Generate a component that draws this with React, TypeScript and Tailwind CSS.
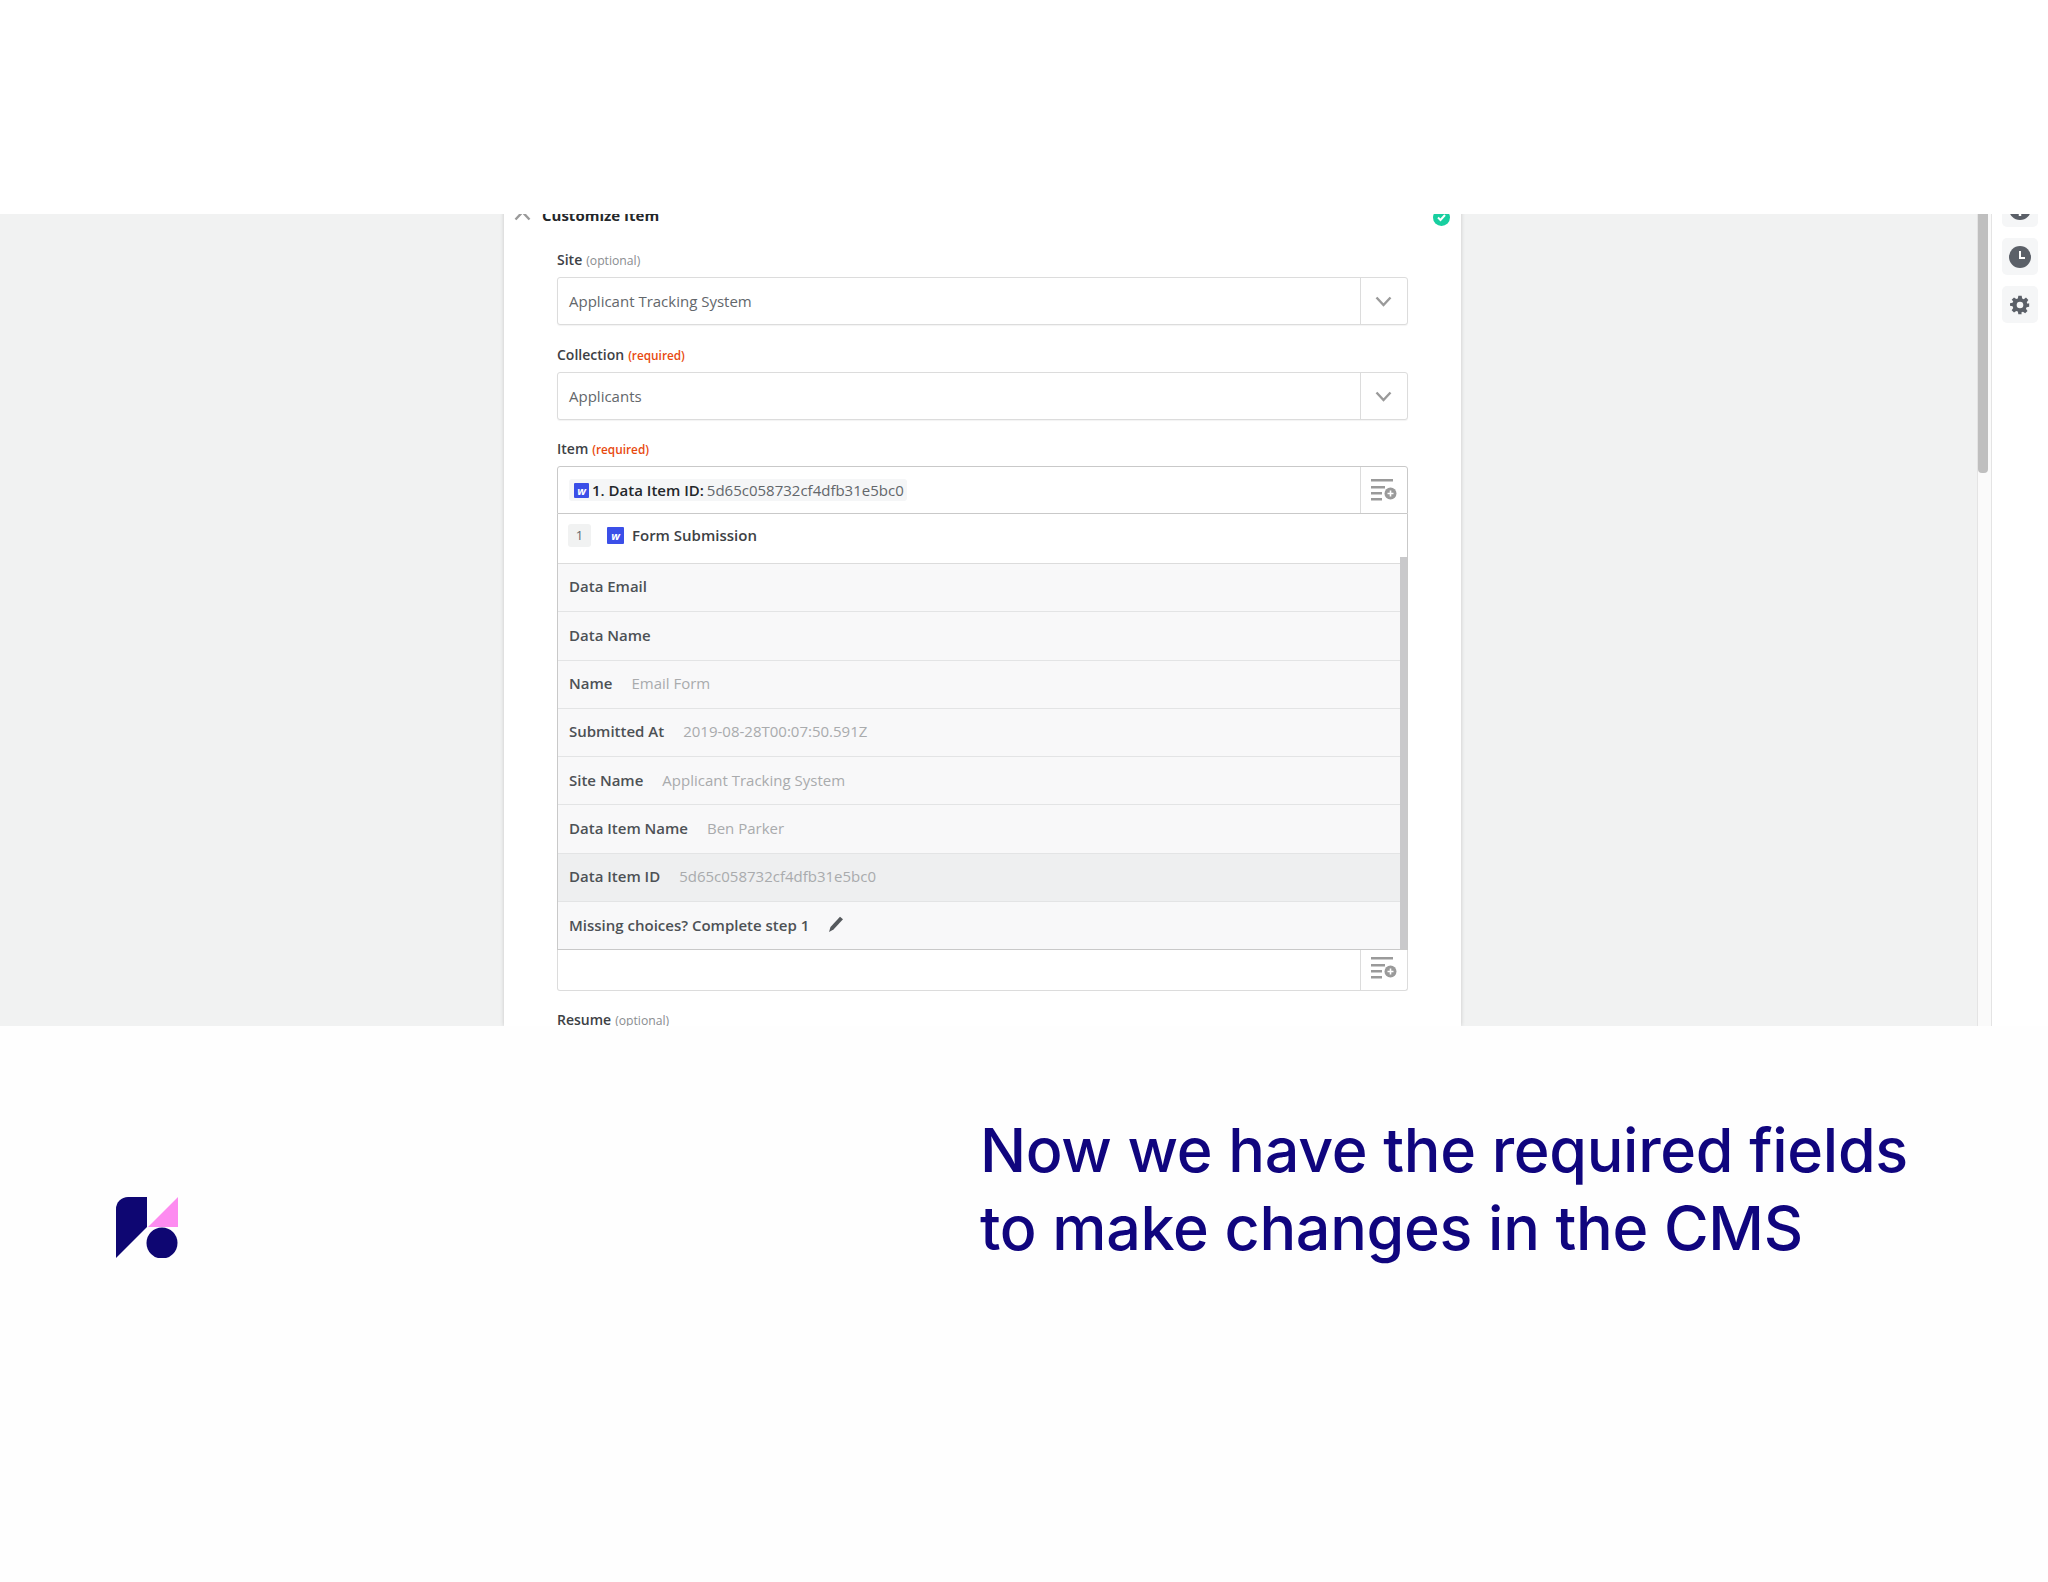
const rows = [
  { label: "Data Email", value: "" },
  { label: "Data Name", value: "" },
  { label: "Name", value: "Email Form" },
  { label: "Submitted At", value: "2019-08-28T00:07:50.591Z" },
  { label: "Site Name", value: "Applicant Tracking System" },
  { label: "Data Item Name", value: "Ben Parker" },
  { label: "Data Item ID", value: "5d65c058732cf4dfb31e5bc0", active: true },
];

function WebflowBadge({ size }: { size: string }) {
  return (
    <span className={`${size} inline-flex shrink-0 items-center justify-center rounded-[1px] bg-[#3b4fe8] text-[11px] font-bold italic leading-none text-white`}>
      w
    </span>
  );
}

function ListPlusIcon() {
  return (
    <svg width="26" height="22" viewBox="0 0 26 22" className="text-[#9a9a9a]">
      <rect x="0" y="0" width="22" height="2.5" fill="currentColor" />
      <rect x="0" y="7" width="14" height="2.5" fill="currentColor" />
      <rect x="0" y="13" width="11" height="2.5" fill="currentColor" />
      <rect x="0" y="19" width="11" height="2.5" fill="currentColor" />
      <circle cx="19.5" cy="14.5" r="6" fill="currentColor" />
      <path d="M19.5 11.5v6M16.5 14.5h6" stroke="#fff" strokeWidth="1.6" />
    </svg>
  );
}

function Chevron({ up }: { up?: boolean }) {
  return (
    <svg width="17" height="11" viewBox="0 0 17 11" fill="none" className="text-[#9a9a9a]">
      <path d={up ? "M1.500 9.500L8.500 2l7 7.500" : "M1.500 1.500L8.500 9l7-7.500"} stroke="currentColor" strokeWidth="2.400" />
    </svg>
  );
}

function FieldLabel({ name, note, required }: { name: string; note: string; required?: boolean }) {
  return (
    <div className="mb-[9px] flex h-[17px] items-baseline gap-[4px] leading-[17px]">
      <span className="text-[14px] font-semibold text-[#3d4145]">{name}</span>
      <span className={`${required ? "text-[11.8px] font-semibold text-[#e8490f]" : "text-[12.2px] text-[#8a8d90]"}`}>{note}</span>
    </div>
  );
}

function SelectField({ value }: { value: string }) {
  return (
    <div className="flex h-[48px] rounded-[3px] border border-[#dcdcdc] bg-white shadow-[0_1px_1px_rgba(0,0,0,0.05)]">
      <div className="flex flex-1 items-center pl-[11px] pt-[1px] text-[15px] text-[#63676b]">{value}</div>
      <div className="flex w-[47px] items-center justify-center border-l border-[#dcdcdc] pr-[1px] pt-[1px]">
        <Chevron />
      </div>
    </div>
  );
}

export default function App() {
  return (
    <div className="min-h-[1582px] bg-[#fefefe] font-['Open_Sans',sans-serif]">
      <div className="h-[214px] bg-white" />

      {/* Screen capture band */}
      <div className="flex h-[812px] overflow-hidden bg-[#f1f2f2]">
        <div className="w-[504px] shrink-0" />

        <div className="-mt-[14px] w-[957px] shrink-0 bg-white pl-[53px] pr-[53px] shadow-[0_0_4px_rgba(0,0,0,0.18)]">
          <div className="relative -ml-[43px] -mr-[33px] flex h-[28px] items-center pt-[3px]">
            <Chevron up />
            <span className="ml-[11px] text-[15px] font-bold text-[#24272a]">Customize Item</span>
            <span className="absolute -right-[9px] top-[9px] flex h-[17px] w-[17px] items-center justify-center rounded-full bg-[#18cfa0]">
              <svg width="11" height="11" viewBox="0 0 11 11" fill="none">
                <path d="M2 5.500l2.500 2.500L9 3" stroke="#fff" strokeWidth="2" />
              </svg>
            </span>
          </div>

          <div className="mt-[23px]">
            <FieldLabel name="Site" note="(optional)" />
            <SelectField value="Applicant Tracking System" />
          </div>
          <div className="mt-[21px]">
            <FieldLabel name="Collection" note="(required)" required />
            <SelectField value="Applicants" />
          </div>
          <div className="mt-[20px]">
            <FieldLabel name="Item" note="(required)" required />
            <div className="flex h-[48px] rounded-t-[3px] border border-[#c9c9c9] bg-white">
              <div className="flex flex-1 items-center pl-[11px]">
                <span className="flex h-[22px] items-center gap-[3px] rounded-[3px] bg-[#f5f6f7] pl-[5px] pr-[3px] text-[15px]">
                  <WebflowBadge size="h-[15px] w-[15px]" />
                  <span className="font-semibold text-[#24272a]">1. Data Item ID:</span>
                  <span className="text-[#63676b]">5d65c058732cf4dfb31e5bc0</span>
                </span>
              </div>
              <div className="flex w-[47px] items-center justify-center border-l border-[#dcdcdc]">
                <ListPlusIcon />
              </div>
            </div>

            {/* Dropdown list */}
            <div className="relative border-x border-b border-[#c9c9c9]">
              <div className="flex h-[50px] items-center border-b border-[#dcdcdc] bg-white pb-[6px] pl-[10px]">
                <span className="flex h-[23px] w-[23px] items-center justify-center rounded-[3px] bg-[#f1f2f2] text-[13px] text-[#63676b]">1</span>
                <span className="ml-[16px] flex"><WebflowBadge size="h-[17px] w-[17px]" /></span>
                <span className="ml-[8px] text-[15px] font-semibold text-[#3d4145]">Form Submission</span>
              </div>
              {rows.map((row) => (
                <div
                  key={row.label}
                  className={`flex h-[48.3px] items-center gap-[19px] border-b border-[#e3e4e5] pb-[2px] pl-[11px] text-[15px] ${row.active ? "bg-[#eeeff0]" : "bg-[#f8f8f9]"}`}
                >
                  <span className="font-semibold text-[#4d5155]">{row.label}</span>
                  {row.value && <span className="text-[#a9abad]">{row.value}</span>}
                </div>
              ))}
              <div className="flex h-[47px] items-center gap-[20px] bg-[#f8f8f9] pb-[1px] pl-[11px] text-[15px] font-semibold text-[#4d5155]">
                <span>Missing choices? Complete step 1</span>
                <svg width="15" height="16" viewBox="0 0 15 16" className="-mt-[2px]">
                  <path d="M11 .8l3 2.400L4.500 13.500 0 16l1.500-5z" fill="#55595d" />
                </svg>
              </div>
              <div className="absolute bottom-0 right-0 top-[43px] w-[7px] bg-[#c9c9cb]" />
            </div>

            <div className="flex h-[41px] rounded-b-[3px] border-x border-b border-[#dcdcdc] bg-white">
              <div className="flex-1" />
              <div className="flex w-[47px] items-center justify-center border-l border-[#dcdcdc] pb-[4px]">
                <ListPlusIcon />
              </div>
            </div>
          </div>
          <div className="mt-[20px]">
            <FieldLabel name="Resume" note="(optional)" />
          </div>
        </div>

        <div className="w-[516px] shrink-0" />

        {/* Scrollbar */}
        <div className="relative w-[15px] shrink-0 border-x border-[#e4e4e4] bg-[#fafafa]">
          <div className="h-[259px] w-[10px] rounded-b-[4px] bg-[#bfbfbf]" />
        </div>

        {/* Side rail */}
        <div className="flex flex-1 flex-col items-center gap-[11px] bg-white">
          <div className="-mt-[24px] flex h-[37px] w-[36px] items-center justify-center rounded-[5px] bg-[#f5f6f7]">
            <svg width="22" height="22" viewBox="0 0 22 22">
              <circle cx="11" cy="11" r="11" fill="#5b6068" />
              <path d="M11 9v9" stroke="#fff" strokeWidth="2.500" />
            </svg>
          </div>
          <div className="flex h-[37px] w-[36px] items-center justify-center rounded-[5px] bg-[#f5f6f7]">
            <svg width="22" height="22" viewBox="0 0 22 22">
              <circle cx="11" cy="11" r="11" fill="#5b6068" />
              <path d="M11 5v7h5" stroke="#fff" strokeWidth="2" fill="none" />
            </svg>
          </div>
          <div className="flex h-[37px] w-[36px] items-center justify-center rounded-[5px] bg-[#f5f6f7]">
            <svg width="20" height="20" viewBox="0 0 24 24" fill="#5b6068">
              <path fillRule="evenodd" d="M10 1h4l.6 3.200 1.900.8 2.700-1.900 2.800 2.800-1.900 2.700.8 1.900L23 10v4l-3.100.6-.8 1.900 1.900 2.700-2.800 2.800-2.700-1.900-1.900.8L14 23h-4l-.6-3.100-1.900-.8-2.700 1.900L2 18.200l1.900-2.700-.8-1.900L0 13v-3l3.100-.6.8-1.900L2 5.800 4.800 3l2.700 1.900 1.900-.8L10 1zm2 7a4 4 0 100 8 4 4 0 000-8z" />
            </svg>
          </div>
        </div>
      </div>

      {/* Caption area */}
      <div className="flex items-start">
        <svg width="62" height="61" viewBox="0 0 62 61" className="ml-[116px] mt-[171px] shrink-0">
          <path d="M12 0H31V30L0 61V12A12 12 0 0 1 12 0Z" fill="#0e0672" />
          <path d="M32 30L62 0V30Z" fill="#fd8bf0" />
          <circle cx="46" cy="46" r="15.500" fill="#0e0672" />
        </svg>
        <h1 className="ml-[802px] mt-[85px] font-['Inter',sans-serif] text-[61px] font-medium leading-[78px] tracking-[-0.3px] text-[#10057e]">
          Now we have the required fields
          <br />
          to make changes in the CMS
        </h1>
      </div>
    </div>
  );
}
